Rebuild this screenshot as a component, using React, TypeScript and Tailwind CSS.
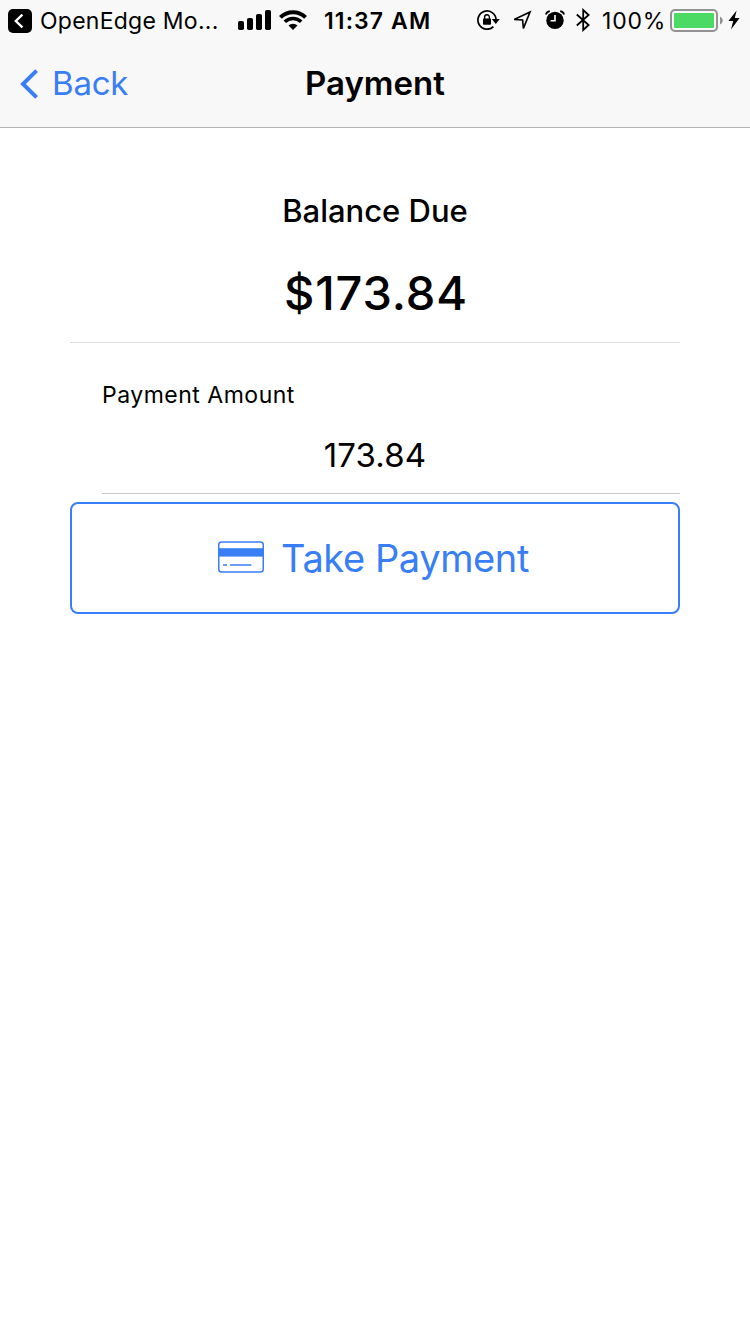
import React from 'react';

const BackAppIcon: React.FC = () => (
  <svg className="mt-0.5 ml-2 w-6 h-6 shrink-0" viewBox="0 0 24 24" fill="none">
    <rect width="24" height="24" rx="5" fill="#000" />
    <path d="M14.4 5.6 L7.8 12 L14.4 18.4" stroke="#fff" strokeWidth="2.4" />
  </svg>
);

const SignalIcon: React.FC = () => (
  <svg className="w-[33px] h-5 shrink-0" viewBox="0 0 33 20">
    <rect x="0" y="11" width="6" height="9" rx="1.8" />
    <rect x="9" y="8" width="6" height="12" rx="1.8" />
    <rect x="18" y="4" width="6" height="16" rx="1.8" />
    <rect x="27" y="0" width="6" height="20" rx="1.8" />
  </svg>
);

const WifiIcon: React.FC = () => (
  <svg className="ml-2 w-7 h-5 shrink-0" viewBox="0 0 28 20" fill="none" stroke="#000">
    <path d="M1.4 7.4 A17.8 17.8 0 0 1 26.6 7.4" strokeWidth="4" />
    <path d="M5.8 11.8 A11.6 11.6 0 0 1 22.2 11.8" strokeWidth="3.5" />
    <path d="M14 20 L9.5 15.5 A6.4 6.4 0 0 1 18.5 15.5 Z" fill="#000" stroke="none" />
  </svg>
);

const RotationLockIcon: React.FC = () => (
  <svg className="w-[23px] h-5 shrink-0" viewBox="0 0 23 20" fill="none" stroke="#000">
    <path d="M16.4 16.6 A9.1 9.1 0 1 1 19.1 9.5" strokeWidth="1.7" />
    <path d="M14.8 9 H22.8 L18.8 14 Z" fill="#000" stroke="none" />
    <rect x="6" y="8.4" width="8" height="6.4" rx="0.8" fill="#000" stroke="none" />
    <path d="M7.6 9 V7.2 A2.4 2.4 0 0 1 12.4 7.2 V9" strokeWidth="1.4" />
  </svg>
);

const LocationIcon: React.FC = () => (
  <svg className="w-5 h-5 shrink-0" viewBox="0 0 20 20" fill="none">
    <path d="M18 2 L2.2 9.5 L10.6 9.9 L11.4 18.4 Z" stroke="#000" strokeWidth="1.6" />
  </svg>
);

const AlarmIcon: React.FC = () => (
  <svg className="w-5 h-5 shrink-0" viewBox="0 0 20 20" fill="none">
    <circle cx="10" cy="10.4" r="8.7" fill="#000" />
    <path d="M10 5 V10.8 H5.6" stroke="#fff" strokeWidth="1.6" />
    <path d="M0.8 4.6 Q1.6 1.8 4.8 1.2" stroke="#000" strokeWidth="1.8" />
    <path d="M19.2 4.6 Q18.4 1.8 15.2 1.2" stroke="#000" strokeWidth="1.8" />
  </svg>
);

const BluetoothIcon: React.FC = () => (
  <svg className="w-[14px] h-6 shrink-0" viewBox="0 0 14 24" fill="none">
    <path
      d="M0.8 6.5 L12.6 17 L7.2 22 V2 L12.6 7 L0.8 17.5"
      stroke="#000"
      strokeWidth="1.8"
    />
  </svg>
);

const BatteryIcon: React.FC = () => (
  <svg className="mt-px w-[53px] h-[23px] shrink-0" viewBox="0 0 53 23" fill="none">
    <rect x="1" y="1" width="46" height="21" rx="4" stroke="#929294" strokeWidth="2" />
    <rect x="4" y="4" width="40" height="15" rx="1.2" fill="#4cd964" />
    <path d="M50 7.5 Q52.8 8.8 52.8 11.5 Q52.8 14.2 50 15.5 Z" fill="#929294" />
  </svg>
);

const BoltIcon: React.FC = () => (
  <svg className="w-3 h-5 shrink-0" viewBox="0 0 12 20">
    <path d="M8.6 0.4 L0.4 11 H5.2 L3 19.6 L11.6 8 H6.8 Z" />
  </svg>
);

const CardIcon: React.FC = () => (
  <svg className="-mt-0.5 w-[46px] h-8 shrink-0" viewBox="0 0 46 32" fill="none">
    <rect x="0.75" y="0.9" width="44.5" height="30.2" rx="2.8" stroke="#387ef5" strokeWidth="1.5" />
    <rect x="0.5" y="7.2" width="45" height="8.4" fill="#387ef5" />
    <path d="M5 23.9 H9 M12 23.9 H33.3" stroke="#387ef5" strokeWidth="1.5" />
  </svg>
);

const StatusBar: React.FC = () => (
  <div className="flex items-center h-10 text-[23px] whitespace-nowrap">
    <BackAppIcon />
    <div className="mt-0.5 ml-2 w-[198px] tracking-[0.25px]">OpenEdge Mo...</div>
    <SignalIcon />
    <WifiIcon />
    <div className="mt-0.5 ml-[17px] w-[153px] font-semibold tracking-[1.1px]">11:37 AM</div>
    <RotationLockIcon />
    <div className="flex items-center ml-3 gap-[13px]">
      <LocationIcon />
      <AlarmIcon />
    </div>
    <div className="ml-[11px] flex">
      <BluetoothIcon />
    </div>
    <div className="mt-0.5 ml-3 w-[68px] tracking-[0.8px]">100%</div>
    <BatteryIcon />
    <div className="ml-[5px]">
      <BoltIcon />
    </div>
  </div>
);

const NavBar: React.FC = () => (
  <div className="grid grid-cols-3 items-center h-[87px] text-[33px]">
    <button className="flex items-center pl-5 text-[#387ef5]">
      <svg className="mt-px w-[18px] h-[30px]" viewBox="0 0 18 30" fill="none">
        <path d="M16.6 1.6 L3 15 L16.6 28.4" stroke="#387ef5" strokeWidth="4" />
      </svg>
      <span className="ml-[14px] tracking-[-0.2px]">Back</span>
    </button>
    <h1 className="text-center font-semibold">Payment</h1>
  </div>
);

export default function App() {
  return (
    <div className="min-h-screen bg-white text-black font-['Inter','Liberation_Sans',sans-serif]">
      <header className="h-32 bg-[#f8f8f8] border-b border-[#b2b2b2]">
        <StatusBar />
        <NavBar />
      </header>

      <main className="px-[70px] pt-[60px]">
        <section className="border-b border-[#dedede] h-[155px] text-center">
          <h2 className="h-[46px] leading-[46px] text-[31px] font-medium">Balance Due</h2>
          <p className="mt-[26px] pl-0.5 h-[66px] leading-[66px] text-[47px] font-medium tracking-[0.9px]">$173.84</p>
        </section>

        <section className="ml-8 h-[151px] pt-8 border-b border-[#c8c7cc]">
          <label className="block h-10 leading-10 text-[23px] tracking-[0.5px]">Payment Amount</label>
          <div className="mt-5 mr-8 h-10 leading-10 text-[33px] text-center tracking-[0.1px]">173.84</div>
        </section>

        <button className="mt-2 pr-[3px] w-full h-28 flex items-center justify-center gap-[17px] border-2 border-[#387ef5] rounded-lg text-[#387ef5] text-[38px]">
          <CardIcon />
          <span className="tracking-[-0.4px]">Take Payment</span>
        </button>
      </main>
    </div>
  );
}
